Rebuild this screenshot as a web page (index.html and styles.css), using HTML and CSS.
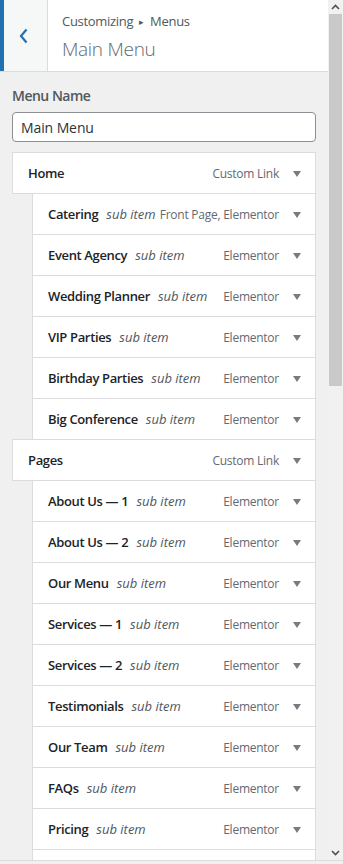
FILE: index.html
```html
<!DOCTYPE html>
<html lang="en">
<head>
  <meta charset="UTF-8">
  <meta name="viewport" content="width=device-width, initial-scale=1.0">
  <title>Customizing Menus</title>
  <link rel="stylesheet" href="styles.css">
</head>
<body>

  <div class="frame">
    <!-- Painel do menu -->
    <div class="pane">
      <div class="pane-head">
        <button class="back" aria-label="Back">
          <svg width="10" height="16" viewBox="0 0 10 16"><path d="M7.5 1.5 L2 8 L7.5 14.5" fill="none" stroke="#2271b1" stroke-width="2.2"/></svg>
        </button>
        <div class="head-title">
          <span class="crumb">Customizing <span class="crumb-arrow">&#9656;</span> Menus</span>
          <h2>Main Menu</h2>
        </div>
      </div>

      <div class="pane-body">
        <label class="name-label" for="menuName">Menu Name</label>
        <input class="name-input" id="menuName" type="text" value="Main Menu">

        <ul class="menu-items">
          <li class="item"><span class="item-title">Home</span><span class="item-type">Custom Link</span><span class="item-edit"></span></li>
          <li class="item sub"><span class="item-title">Catering</span><em class="is-sub">sub item</em><span class="item-type">Front Page, Elementor</span><span class="item-edit"></span></li>
          <li class="item sub"><span class="item-title">Event Agency</span><em class="is-sub">sub item</em><span class="item-type">Elementor</span><span class="item-edit"></span></li>
          <li class="item sub"><span class="item-title">Wedding Planner</span><em class="is-sub">sub item</em><span class="item-type">Elementor</span><span class="item-edit"></span></li>
          <li class="item sub"><span class="item-title">VIP Parties</span><em class="is-sub">sub item</em><span class="item-type">Elementor</span><span class="item-edit"></span></li>
          <li class="item sub"><span class="item-title">Birthday Parties</span><em class="is-sub">sub item</em><span class="item-type">Elementor</span><span class="item-edit"></span></li>
          <li class="item sub"><span class="item-title">Big Conference</span><em class="is-sub">sub item</em><span class="item-type">Elementor</span><span class="item-edit"></span></li>
          <li class="item"><span class="item-title">Pages</span><span class="item-type">Custom Link</span><span class="item-edit"></span></li>
          <li class="item sub"><span class="item-title">About Us — 1</span><em class="is-sub">sub item</em><span class="item-type">Elementor</span><span class="item-edit"></span></li>
          <li class="item sub"><span class="item-title">About Us — 2</span><em class="is-sub">sub item</em><span class="item-type">Elementor</span><span class="item-edit"></span></li>
          <li class="item sub"><span class="item-title">Our Menu</span><em class="is-sub">sub item</em><span class="item-type">Elementor</span><span class="item-edit"></span></li>
          <li class="item sub"><span class="item-title">Services — 1</span><em class="is-sub">sub item</em><span class="item-type">Elementor</span><span class="item-edit"></span></li>
          <li class="item sub"><span class="item-title">Services — 2</span><em class="is-sub">sub item</em><span class="item-type">Elementor</span><span class="item-edit"></span></li>
          <li class="item sub"><span class="item-title">Testimonials</span><em class="is-sub">sub item</em><span class="item-type">Elementor</span><span class="item-edit"></span></li>
          <li class="item sub"><span class="item-title">Our Team</span><em class="is-sub">sub item</em><span class="item-type">Elementor</span><span class="item-edit"></span></li>
          <li class="item sub"><span class="item-title">FAQs</span><em class="is-sub">sub item</em><span class="item-type">Elementor</span><span class="item-edit"></span></li>
          <li class="item sub"><span class="item-title">Pricing</span><em class="is-sub">sub item</em><span class="item-type">Elementor</span><span class="item-edit"></span></li>
          <!-- próximo item, cortado pela borda -->
          <li class="item sub"></li>
        </ul>
      </div>
    </div>

    <!-- Barra de rolagem -->
    <div class="scrollbar">
      <span class="sb-arrow">
        <svg width="9" height="6" viewBox="0 0 9 6"><path d="M1 5 L4.5 1.5 L8 5" fill="none" stroke="#505050" stroke-width="1.6"/></svg>
      </span>
      <div class="sb-track"><div class="sb-thumb"></div></div>
      <span class="sb-arrow">
        <svg width="9" height="6" viewBox="0 0 9 6"><path d="M1 1 L4.5 4.5 L8 1" fill="none" stroke="#505050" stroke-width="1.6"/></svg>
      </span>
    </div>
  </div>

  <div class="footer-strip"></div>

</body>
</html>
```

FILE: styles.css
```css
/* Base */
body {
  margin: 0;
  height: 864px;
  overflow: hidden;
  background: #f0f0f1;
  font-family: "Open Sans", "Noto Sans", sans-serif;
  color: #2c3338;
}

.frame {
  display: flex;
  height: 860px;
}

.pane {
  flex: 1;
  overflow: hidden;
  background: #f0f0f1;
}

/* Cabeçalho */
.pane-head {
  display: flex;
  height: 71px;
  background: #fff;
  border-bottom: 1px solid #dcdcde;
}

.back {
  width: 48px;
  padding: 0;
  background: #f6f7f7;
  border: none;
  border-left: 4px solid #2271b1;
  border-right: 1px solid #dcdcde;
  display: flex;
  align-items: center;
  justify-content: center;
  padding-right: 3px;
  cursor: pointer;
}

.head-title {
  padding: 11px 0 0 14px;
}

.crumb {
  display: block;
  font-size: 13px;
  letter-spacing: -0.3px;
  line-height: 20px;
  color: #50575e;
}

.crumb-arrow {
  font-size: 9px;
  position: relative;
  top: -1px;
  margin: 0 3px;
}

.head-title h2 {
  margin: 2px 0 0;
  font-size: 19px;
  font-weight: 300;
  letter-spacing: -0.3px;
  line-height: 28px;
  color: #646970;
}

/* Corpo */
.pane-body {
  padding: 14px 12px 0;
}

.name-label {
  display: block;
  font-size: 14px;
  font-weight: 600;
  letter-spacing: -0.5px;
  color: #50575e;
  line-height: 20px;
  margin-bottom: 6px;
}

.name-input {
  display: block;
  box-sizing: border-box;
  width: 304px;
  height: 30px;
  padding: 0 8px;
  border: 1px solid #8c8f94;
  border-radius: 4px;
  font-family: inherit;
  font-size: 14px;
  letter-spacing: -0.1px;
  color: #2c3338;
  background: #fff;
}

/* Lista de itens */
.menu-items {
  list-style: none;
  margin: 10px 0 0;
  padding: 0;
}

.item {
  display: flex;
  align-items: center;
  box-sizing: border-box;
  width: 304px;
  height: 42px;
  margin-bottom: -1px;
  padding: 0 0 0 15px;
  background: #fff;
  border: 1px solid #dcdcde;
  font-size: 13px;
  white-space: nowrap;
}

.item.sub {
  width: 284px;
  margin-left: 20px;
}

.item-title {
  font-weight: 600;
  letter-spacing: -0.35px;
  color: #1d2327;
}

.is-sub {
  margin-left: 8px;
  font-style: italic;
  color: #50575e;
}

.item-type {
  margin-left: auto;
  font-size: 12px;
  letter-spacing: -0.25px;
  color: #646970;
}

.item-edit {
  width: 36px;
  height: 40px;
  display: flex;
  align-items: center;
  justify-content: center;
}

.item-edit::before {
  content: "";
  border-left: 4px solid transparent;
  border-right: 4px solid transparent;
  border-top: 6px solid #787c82;
  margin-top: 1px;
}

/* Barra de rolagem desenhada */
.scrollbar {
  width: 15px;
  display: flex;
  flex-direction: column;
  background: #f1f1f1;
}

.sb-arrow {
  height: 14px;
  display: flex;
  align-items: center;
  justify-content: center;
}

.sb-track {
  flex: 1;
}

.sb-thumb {
  height: 372px;
  margin: 0 1px;
  background: #c9c9c9;
}

.footer-strip {
  height: 3px;
  border-top: 1px solid #dcdcde;
  background: #f0f0f1;
}
```
